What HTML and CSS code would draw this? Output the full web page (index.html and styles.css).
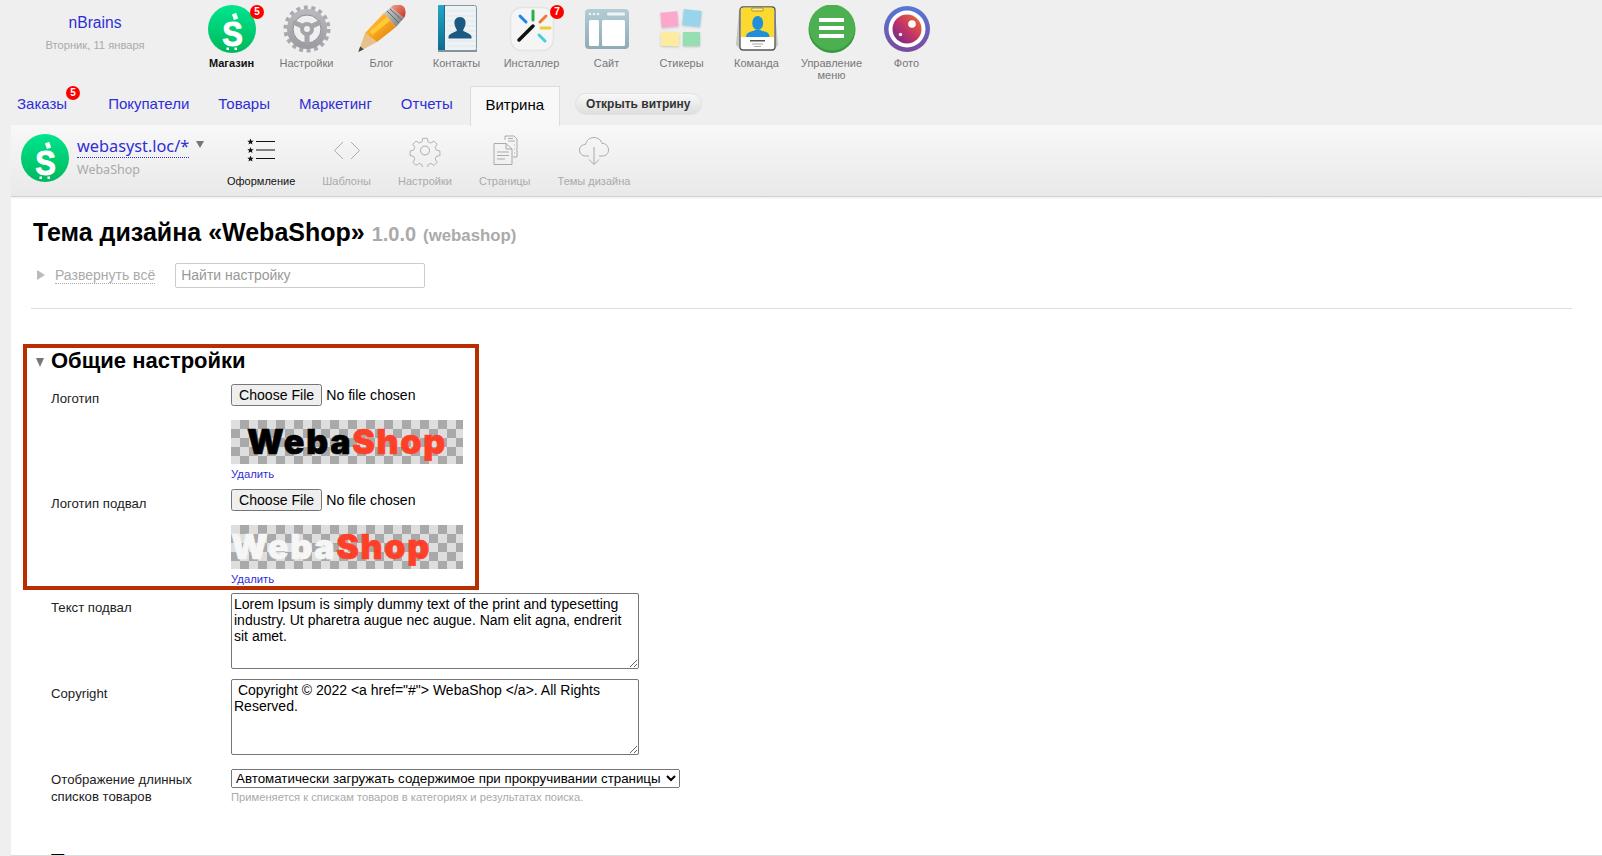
FILE: index.html
```html
<!DOCTYPE html>
<html lang="ru">
<head>
<meta charset="utf-8">
<title>Тема дизайна WebaShop</title>
<link rel="stylesheet" href="styles.css">
</head>
<body>
<svg class="defs" width="0" height="0" aria-hidden="true">
  <defs>
    <linearGradient id="gShop" x1="0" y1="0" x2="0" y2="1"><stop offset="0" stop-color="#00e58e"/><stop offset="1" stop-color="#00b85c"/></linearGradient>
    <linearGradient id="gPhoto" x1="0" y1="0" x2="0" y2="1"><stop offset="0" stop-color="#5578d8"/><stop offset="1" stop-color="#7a4aa0"/></linearGradient>
    <linearGradient id="gPhotoIn" x1="1" y1="0" x2="0" y2="1"><stop offset="0" stop-color="#f0702a"/><stop offset="0.55" stop-color="#c0306a"/><stop offset="1" stop-color="#5a2c90"/></linearGradient>
    <linearGradient id="gPencil" x1="0" y1="0" x2="1" y2="1"><stop offset="0" stop-color="#ffd24a"/><stop offset="0.5" stop-color="#f9a51e"/><stop offset="1" stop-color="#d9780c"/></linearGradient>
    <linearGradient id="gFerrule" x1="0" y1="0" x2="1" y2="1"><stop offset="0" stop-color="#d4d4d4"/><stop offset="1" stop-color="#777"/></linearGradient>
    <linearGradient id="gEraser" x1="0" y1="0" x2="1" y2="1"><stop offset="0" stop-color="#f3a08c"/><stop offset="1" stop-color="#c8301e"/></linearGradient>
    <linearGradient id="gSite" x1="0" y1="0" x2="0" y2="1"><stop offset="0" stop-color="#b4ccd6"/><stop offset="1" stop-color="#8fabb6"/></linearGradient>
    <linearGradient id="gGear" x1="0" y1="0" x2="0" y2="1"><stop offset="0" stop-color="#b8b8bc"/><stop offset="1" stop-color="#9c9ca2"/></linearGradient>
    <linearGradient id="gSpine" x1="0" y1="0" x2="0" y2="1"><stop offset="0" stop-color="#23a6c8"/><stop offset="1" stop-color="#0e6a8e"/></linearGradient>
    <symbol id="shop" viewBox="0 0 48 48">
      <circle cx="24" cy="24" r="24" fill="url(#gShop)"/>
      <rect x="25" y="8.500" width="4.500" height="6" fill="#fff" transform="rotate(-20 27 12)"/>
      <text class="dollar" transform="translate(24.500 40.500) scale(0.86 1)" text-anchor="middle">S</text>
      <rect x="18.500" y="42.500" width="2.500" height="2.500" fill="#fff"/>
      <rect x="26.500" y="42.500" width="2.500" height="2.500" fill="#fff"/>
    </symbol>
  </defs>
</svg>

<header class="top">
  <div class="account">
    <a class="account-name" href="#">nBrains</a>
    <div class="account-date">Вторник, 11 января</div>
  </div>
  <nav class="apps">
    <a class="app app-current" href="#">
      <svg class="app-icon" viewBox="0 0 48 48"><use href="#shop"/></svg>
      <span class="badge badge-app">5</span>
      <span class="app-label">Магазин</span>
    </a>
    <a class="app" href="#">
      <svg class="app-icon" viewBox="0 0 48 48">
        <circle cx="24" cy="24" r="21.500" fill="none" stroke="#a9a9ae" stroke-width="4" stroke-dasharray="3.900 3.600"/>
        <circle cx="24" cy="24" r="17" fill="none" stroke="url(#gGear)" stroke-width="6"/>
        <circle cx="24" cy="24" r="14" fill="none" stroke="#8e8e94" stroke-width="1"/>
        <circle cx="24" cy="24" r="5" fill="none" stroke="#a4a4aa" stroke-width="4"/>
        <path d="M20 21.500 L10 17 M28 21.500 L38 17 M24 29 L24 39" stroke="#a4a4aa" stroke-width="5"/>
      </svg>
      <span class="app-label">Настройки</span>
    </a>
    <a class="app" href="#">
      <svg class="app-icon" viewBox="0 0 48 48">
        <path d="M0.300 47 L7 28 L19 37 Z" fill="#e8c08c"/>
        <path d="M0.300 47 L2.200 41.500 L5.800 44.300 Z" fill="#444"/>
        <path d="M7 28 L26 8 L38 22 L19 37 Z" fill="url(#gPencil)"/>
        <path d="M12 26 L30 11 L33 15 L14 30 Z" fill="#ffc93a"/>
        <path d="M26 8 L33 2 L46 13 L38 22 Z" fill="url(#gFerrule)"/>
        <path d="M29 6 L41 18 M32 4 L44 15" stroke="#666" stroke-width="1"/>
        <path d="M33 2 C36 -1 42 -2 46 2 C48 5 48 10 46 13 Z" fill="url(#gEraser)"/>
      </svg>
      <span class="app-label">Блог</span>
    </a>
    <a class="app" href="#">
      <svg class="app-icon" viewBox="0 0 48 48">
        <rect x="5.500" y="0.500" width="38" height="45" rx="2" fill="#eef2f5" stroke="#7e9aa6"/>
        <path d="M14 6 H43 M14 11 H43 M14 16 H43 M14 21 H43 M14 26 H43 M14 31 H43 M14 36 H43 M14 41 H43" stroke="#e0e6ea" stroke-width="1"/>
        <rect x="5" y="0" width="6" height="46" rx="1" fill="url(#gSpine)"/>
        <rect x="11" y="0" width="1" height="46" fill="#156b88"/>
        <path d="M27 12 c4 0 6 3 5.500 7 c-0.300 3 -2 5 -2.500 6.500 c2 2 7 2.500 8.500 6 l0 2 l-23 0 l0 -2 c1.500 -3.500 6.500 -4 8.500 -6 c-0.500 -1.500 -2.200 -3.500 -2.500 -6.500 c-0.500 -4 1.500 -7 5.500 -7 Z" fill="#1a5a80"/>
        <rect x="5" y="45" width="39" height="2" fill="#7f969e"/>
      </svg>
      <span class="app-label">Контакты</span>
    </a>
    <a class="app" href="#">
      <svg class="app-icon" viewBox="0 0 48 48">
        <rect x="2.500" y="2.500" width="43" height="43" rx="11" fill="#f5f5f5" stroke="#e4e4e4" stroke-width="1.500"/>
        <path d="M11 35 L25 21" stroke="#111" stroke-width="3.500" stroke-linecap="round"/>
        <path d="M25 6 L25 15" stroke="#22b14c" stroke-width="3" stroke-linecap="round"/>
        <path d="M12 11 L18 17" stroke="#2186e8" stroke-width="3" stroke-linecap="round"/>
        <path d="M38 11 L32 17" stroke="#f07a30" stroke-width="3" stroke-linecap="round"/>
        <path d="M33 23 L42 23" stroke="#f2cb2e" stroke-width="3" stroke-linecap="round"/>
        <path d="M31 30 L37 36" stroke="#47cfd8" stroke-width="3" stroke-linecap="round"/>
      </svg>
      <span class="badge badge-app">7</span>
      <span class="app-label">Инсталлер</span>
    </a>
    <a class="app" href="#">
      <svg class="app-icon" viewBox="0 0 48 48">
        <rect x="2" y="4" width="44" height="40" rx="4" fill="url(#gSite)"/>
        <circle cx="7" cy="9" r="1.300" fill="#eef4f6"/><circle cx="11" cy="9" r="1.300" fill="#eef4f6"/><circle cx="15" cy="9" r="1.300" fill="#eef4f6"/>
        <rect x="24" y="7.500" width="18" height="3" rx="1" fill="#eef4f6"/>
        <rect x="6" y="15" width="10" height="26" rx="1.500" fill="#fff"/>
        <rect x="19" y="15" width="23" height="26" rx="1.500" fill="#fff"/>
      </svg>
      <span class="app-label">Сайт</span>
    </a>
    <a class="app" href="#">
      <svg class="app-icon stickers" viewBox="0 0 48 48">
        <rect x="3" y="7" width="17" height="15" fill="#fba8cc" transform="rotate(-5 11 15)"/>
        <rect x="25" y="5" width="18" height="16" fill="#98d4ea" transform="rotate(6 34 13)"/>
        <rect x="3" y="27" width="18" height="14" fill="#fdeb9e" transform="rotate(2 12 34)"/>
        <rect x="25" y="27" width="17" height="14" fill="#96dfb0"/>
      </svg>
      <span class="app-label">Стикеры</span>
    </a>
    <a class="app" href="#">
      <svg class="app-icon" viewBox="0 0 48 48">
        <path d="M6 6 L3 40 L8 45 H41 L45 40 L42 6 Z" fill="#c4c4c4"/>
        <rect x="7" y="2" width="35" height="43" rx="3" fill="#fff" stroke="#555" stroke-width="1.300"/>
        <path d="M8 5 a2.500 2.500 0 0 1 2.500 -2.500 h28 a2.500 2.500 0 0 1 2.500 2.500 v27 h-33 Z" fill="#fbd92e"/>
        <rect x="18.500" y="3" width="12" height="3" rx="1.500" fill="#fbe98a" stroke="#887a20" stroke-width="0.700"/>
        <ellipse cx="24.700" cy="18" rx="5.500" ry="7" fill="#1e8fd8"/>
        <path d="M13 32 c0 -6 7 -5 9 -7 h5.500 c2 2 9 1 9 7 Z" fill="#1e8fd8"/>
        <rect x="17" y="35" width="15" height="1.500" fill="#555"/><rect x="19" y="38.500" width="11" height="1" fill="#aaa"/><rect x="21" y="41" width="7" height="1" fill="#aaa"/>
      </svg>
      <span class="app-label">Команда</span>
    </a>
    <a class="app" href="#">
      <svg class="app-icon" viewBox="0 0 48 48">
        <circle cx="24" cy="24.500" r="23.500" fill="#37983f"/>
        <circle cx="24" cy="22.500" r="23" fill="#4caf50"/>
        <rect x="11" y="13" width="25" height="4" fill="#fff"/><rect x="11" y="21" width="25" height="4" fill="#fff"/><rect x="11" y="29" width="25" height="4" fill="#fff"/>
      </svg>
      <span class="app-label">Управление меню</span>
    </a>
    <a class="app" href="#">
      <svg class="app-icon" viewBox="0 0 48 48">
        <circle cx="24" cy="24" r="23" fill="url(#gPhoto)"/>
        <circle cx="24" cy="24" r="18.500" fill="#fff"/>
        <circle cx="24" cy="24" r="14.500" fill="url(#gPhotoIn)"/>
        <circle cx="29" cy="19" r="3.800" fill="#fff"/>
        <circle cx="17.500" cy="29.500" r="1.800" fill="#ffe9d8"/>
      </svg>
      <span class="app-label">Фото</span>
    </a>
  </nav>
</header>

<nav class="tabs">
  <a class="tab tab-orders" href="#">Заказы<span class="badge badge-tab">5</span></a>
  <a class="tab" href="#">Покупатели</a>
  <a class="tab" href="#">Товары</a>
  <a class="tab" href="#">Маркетинг</a>
  <a class="tab" href="#">Отчеты</a>
  <a class="tab tab-selected" href="#">Витрина</a>
  <a class="open-store" href="#">Открыть витрину</a>
</nav>

<main class="panel">
  <div class="toolbar">
    <svg class="site-logo" viewBox="0 0 48 48"><use href="#shop"/></svg>
    <div class="site">
      <div class="site-line"><a class="site-url" href="#">webasyst.loc/*</a><span class="site-caret"></span></div>
      <div class="site-name">WebaShop</div>
    </div>
    <nav class="tools">
      <a class="tool tool-current" href="#">
        <svg class="tool-icon" viewBox="0 0 32 32" fill="none" stroke="#111">
          <path d="M11 6.500 H30 M11 15 H30 M11 23.500 H30" stroke-width="1"/>
          <path fill="#111" stroke="none" transform="translate(2 0)" d="M3.500 3.500 L4.400 5.700 L6.700 5.800 L4.900 7.200 L5.500 9.500 L3.500 8.200 L1.500 9.500 L2.100 7.200 L0.300 5.800 L2.600 5.700 Z M3.500 12 L4.400 14.200 L6.700 14.300 L4.900 15.700 L5.500 18 L3.500 16.700 L1.500 18 L2.100 15.700 L0.300 14.300 L2.600 14.200 Z M3.500 20.500 L4.400 22.700 L6.700 22.800 L4.900 24.200 L5.500 26.500 L3.500 25.200 L1.500 26.500 L2.100 24.200 L0.300 22.800 L2.600 22.700 Z"/>
        </svg>
        <span>Оформление</span>
      </a>
      <a class="tool" href="#">
        <svg class="tool-icon" viewBox="0 0 32 32" fill="none" stroke="#aaa"><path d="M12 7 L3.500 15.500 L12 24 M20 7 L28.500 15.500 L20 24" stroke-width="1"/></svg>
        <span>Шаблоны</span>
      </a>
      <a class="tool" href="#">
        <svg class="tool-icon" viewBox="0 0 32 32" fill="none" stroke="#aaa">
          <circle cx="16" cy="15.500" r="4.500"/>
          <path d="M13.500 2 h5 l1 4 l3 1.300 l3.500 -2.200 l3.500 3.500 l-2.200 3.500 l1.300 3 l4 1 v0.800 v4.200 l-4 1 l-1.300 3 l2.200 3.500 l-3.500 3.500 l-3.500 -2.200 l-3 1.300 l-1 4 h-5 l-1 -4 l-3 -1.300 l-3.500 2.200 l-3.500 -3.500 l2.200 -3.500 l-1.300 -3 l-4 -1 v-5 l4 -1 l1.300 -3 l-2.200 -3.500 l3.500 -3.500 l3.500 2.200 l3 -1.300 Z" transform="translate(1.600 1.500) scale(0.9)"/>
        </svg>
        <span>Настройки</span>
      </a>
      <a class="tool" href="#">
        <svg class="tool-icon" viewBox="0 0 32 32" fill="none" stroke="#aaa">
          <path d="M16 5 V1 H25 L28 4 V22 H24"/>
          <path d="M5 8.500 H17 L23 14 V29.500 H5 Z"/>
          <path d="M17 8.500 V14 H23 M8 17 H20 M8 20.500 H20 M8 24 H16 M19 3.500 H24 M19 6 H26 M25 10 H26 M25 14 H26 M25 18 H26"/>
        </svg>
        <span>Страницы</span>
      </a>
      <a class="tool" href="#">
        <svg class="tool-icon" viewBox="0 0 32 32" fill="none" stroke="#aaa">
          <path d="M11 21 H8 C3 21 1.500 17.500 1.500 15 C1.500 12 4 9.500 7.500 9.500 C8.500 5 12 2.500 16 2.500 C20 2.500 23 5 24 8.500 C28 8 30.500 11.500 30.500 15 C30.500 18.500 28 21 24.500 21 H21"/>
          <path d="M16 12 V29 M11 24.500 L16 29.500 L21 24.500"/>
        </svg>
        <span>Темы дизайна</span>
      </a>
    </nav>
  </div>

  <div class="content">
    <h1 class="title">Тема дизайна «WebaShop» <span class="version">1.0.0</span> <span class="theme-id">(webashop)</span></h1>
    <div class="filter">
      <span class="arrow-right"></span>
      <a class="expand" href="#">Развернуть всё</a>
      <input class="search" type="text" placeholder="Найти настройку">
    </div>
    <hr class="divider">

    <h2 class="section"><span class="arrow-down"></span>Общие настройки</h2>

    <div class="row row-file">
      <label class="row-label">Логотип</label>
      <div class="row-value">
        <input class="file" type="file">
        <div class="logo-preview"><span class="logo logo-dark">Weba<span class="logo-accent">Shop</span></span></div>
        <a class="remove" href="#">Удалить</a>
      </div>
    </div>

    <div class="row row-file-second">
      <label class="row-label">Логотип подвал</label>
      <div class="row-value">
        <input class="file" type="file">
        <div class="logo-preview logo-preview-left"><span class="logo logo-light">Weba<span class="logo-accent">Shop</span></span></div>
        <a class="remove" href="#">Удалить</a>
      </div>
    </div>

    <div class="row row-text">
      <label class="row-label">Текст подвал</label>
      <div class="row-value"><textarea class="area">Lorem Ipsum is simply dummy text of the print and typesetting industry. Ut pharetra augue nec augue. Nam elit agna, endrerit sit amet.</textarea></div>
    </div>

    <div class="row row-last-text">
      <label class="row-label">Copyright</label>
      <div class="row-value"><textarea class="area"> Copyright © 2022 &lt;a href="#"&gt; WebaShop &lt;/a&gt;. All Rights Reserved.</textarea></div>
    </div>

    <div class="row row-select">
      <label class="row-label">Отображение длинных списков товаров</label>
      <div class="row-value">
        <select class="select"><option>Автоматически загружать содержимое при прокручивании страницы</option></select>
        <div class="hint">Применяется к спискам товаров в категориях и результатах поиска.</div>
      </div>
    </div>

    <h2 class="section section-next">Т</h2>
  </div>

  <div class="highlight"></div>
</main>
</body>
</html>
```

FILE: styles.css
```css
* { box-sizing: border-box; }
html, body { height: 100%; }
body {
  margin: 0;
  height: 856px;
  overflow: hidden;
  background: #efefef;
  font-family: "Liberation Sans", Arial, sans-serif;
  color: #000;
}
a { text-decoration: none; color: #2e2ed6; }
.defs { position: absolute; }
.dollar { font: bold 36px "Liberation Sans", Arial, sans-serif; fill: #fff; stroke: #fff; stroke-width: 1px; }
.stickers rect { filter: drop-shadow(0 1px 1px rgba(0,0,0,.18)); }

.top { display: flex; height: 86px; }
.account { width: 190px; padding-top: 14px; text-align: center; }
.account-name { font-size: 15.600px; line-height: 18px; display: block; }
.account-date { margin-top: 7px; font-size: 11.200px; line-height: 13px; color: #aaa; }

.apps { display: flex; margin-left: 4px; }
.app {
  position: relative;
  width: 75px;
  padding-top: 5px;
  display: flex;
  flex-direction: column;
  align-items: center;
  color: #777;
  font-size: 11px;
  line-height: 12px;
  text-align: center;
}
.app-icon { width: 48px; height: 48px; display: block; }
.app-label { margin-top: 4px; width: 70px; }
.app-current { color: #111; font-weight: bold; }

.badge {
  position: absolute;
  width: 14px;
  height: 14px;
  border-radius: 50%;
  background: #f00;
  color: #fff;
  font-size: 10px;
  font-weight: bold;
  line-height: 14px;
  text-align: center;
}
.badge-app { top: 5px; left: 56px; }
.badge-tab { top: 0; right: -13px; }

.tabs { display: flex; align-items: flex-start; height: 39px; padding-left: 17px; }
.tab { position: relative; margin-right: 29px; padding-top: 9px; font-size: 15px; line-height: 18px; }
.tab-orders { margin-right: 41px; }
.tab-selected {
  width: 90px;
  height: 40px;
  margin: 0 15px 0 -12px;
  padding-top: 9px;
  text-align: center;
  color: #000;
  background: #f8f8f8;
  border: 1px solid #dcdcdc;
  border-bottom: 0;
  z-index: 1;
}
.open-store {
  margin-top: 7px;
  width: 127px;
  height: 22px;
  border: 1px solid #e2e2e2;
  border-radius: 11px;
  background: linear-gradient(#f8f8f8, #dedede);
  color: #333;
  font-size: 12px;
  font-weight: bold;
  line-height: 20px;
  text-align: center;
}

.panel { position: relative; margin-left: 11px; height: 731px; overflow: hidden; background: #fff; border-bottom: 1px solid #ddd; }
.toolbar {
  display: flex;
  height: 72px;
  padding: 9px 0 0 10px;
  background: linear-gradient(#f8f8f8, #e9e9e9);
  border-bottom: 1px solid #d2d2d2;
  box-shadow: 0 1px 2px rgba(0,0,0,.08);
}
.site-logo { width: 48px; height: 48px; flex: none; }
.site { width: 150px; margin-left: 8px; padding-top: 2px; }
.site-line { display: flex; }
.site-url {
  font-family: "Noto Sans", sans-serif;
  font-size: 16.300px;
  line-height: 21px;
  color: #2e2ed6;
  border-bottom: 1px dotted #2e2ed6;
  height: 22px;
}
.site-caret {
  margin: 5px 0 0 7px;
  width: 0; height: 0;
  border-left: 4px solid transparent;
  border-right: 4px solid transparent;
  border-top: 7px solid #777;
}
.site-name { margin-top: 4px; font-family: "Noto Sans", sans-serif; font-size: 12.500px; line-height: 16px; color: #aaa; }

.tools { display: flex; gap: 27px; }
.tool { display: flex; flex-direction: column; align-items: center; color: #aaa; font-size: 11px; line-height: 13px; }
.tool-icon { width: 32px; height: 32px; margin: 1px 0 8px; display: block; }
.tool-current { color: #111; }

.content { padding: 21px 30px 0 20px; }
.title { margin: 0 0 0 2px; font-size: 25px; line-height: 28px; font-weight: bold; }
.version { font-size: 20px; color: #aaa; }
.theme-id { font-size: 16.800px; color: #aaa; }

.filter { display: flex; align-items: center; margin: 12px 0 0 0; padding-left: 6px; height: 26px; }
.arrow-right { width: 0; height: 0; border-top: 5px solid transparent; border-bottom: 5px solid transparent; border-left: 8px solid #bbb; }
.expand { margin: 2px 0 0 10px; font-size: 14px; color: #aaa; border-bottom: 1px dotted #aaa; line-height: 15px; }
.search {
  margin-left: 20px;
  width: 250px;
  height: 25px;
  padding: 0 5px;
  border: 1px solid #ccc;
  border-radius: 2px;
  font: 14px "Liberation Sans", Arial, sans-serif;
  background: #fff;
}
.search::placeholder { color: #999; }
.divider { margin: 20px 0 0 0; border: 0; border-top: 1px solid #ddd; }

.section { position: relative; margin: 40px 0 0 20px; font-size: 22px; line-height: 24px; font-weight: bold; }
.arrow-down { position: absolute; left: -15px; top: 9px; width: 0; height: 0; border-left: 4.500px solid transparent; border-right: 4.500px solid transparent; border-top: 9px solid #777; }

.row { display: flex; margin-left: 20px; }
.row-label { width: 180px; flex: none; padding-top: 6px; font-size: 13.200px; line-height: 17px; color: #222; padding-right: 20px; }
.row-value { flex: 1; }
.row-file { height: 105px; }
.row-file-second { height: 104px; }
.section + .row { margin-top: 11px; }
.row-text { height: 86px; }
.row-last-text { height: 90px; }

.file { display: block; font: 14.100px "Liberation Sans", Arial, sans-serif; height: 22px; }
.logo-preview {
  width: 232px;
  height: 44px;
  margin-top: 14px;
  padding-left: 16px;
  background: repeating-conic-gradient(#a9a9a9 0 25%, #dedede 0 50%) 0 0 / 18px 18px;
  overflow: hidden;
}
.logo-preview-left { padding-left: 0; }
.logo { display: block; font-family: Inter, "Liberation Sans", sans-serif; font-weight: 900; font-size: 34px; line-height: 43px; letter-spacing: 1.700px; -webkit-text-stroke: 0.6px currentColor; }
.logo-dark { color: #000; }
.logo-light { color: #f6f6f6; }
.logo-accent { color: #ff4029; }
.remove { display: block; margin-top: 4px; font-size: 11.300px; line-height: 13px; }

.area {
  display: block;
  width: 408px;
  height: 76px;
  padding: 2px;
  border: 1px solid #767676;
  border-radius: 2px;
  font: 14px/16px "Liberation Sans", Arial, sans-serif;
  color: #000;
}
.row-select .row-label { padding-top: 2px; }
.select { display: block; width: 449px; height: 19px; font: 13.330px "Liberation Sans", Arial, sans-serif; }
.hint { margin-top: 3px; font-size: 11.200px; line-height: 13px; color: #aaa; }
.section-next { margin-top: 45px; }

.highlight {
  position: absolute;
  left: 12px;
  top: 219px;
  width: 456px;
  height: 246px;
  border: 4px solid #b92e00;
  pointer-events: none;
}
```
